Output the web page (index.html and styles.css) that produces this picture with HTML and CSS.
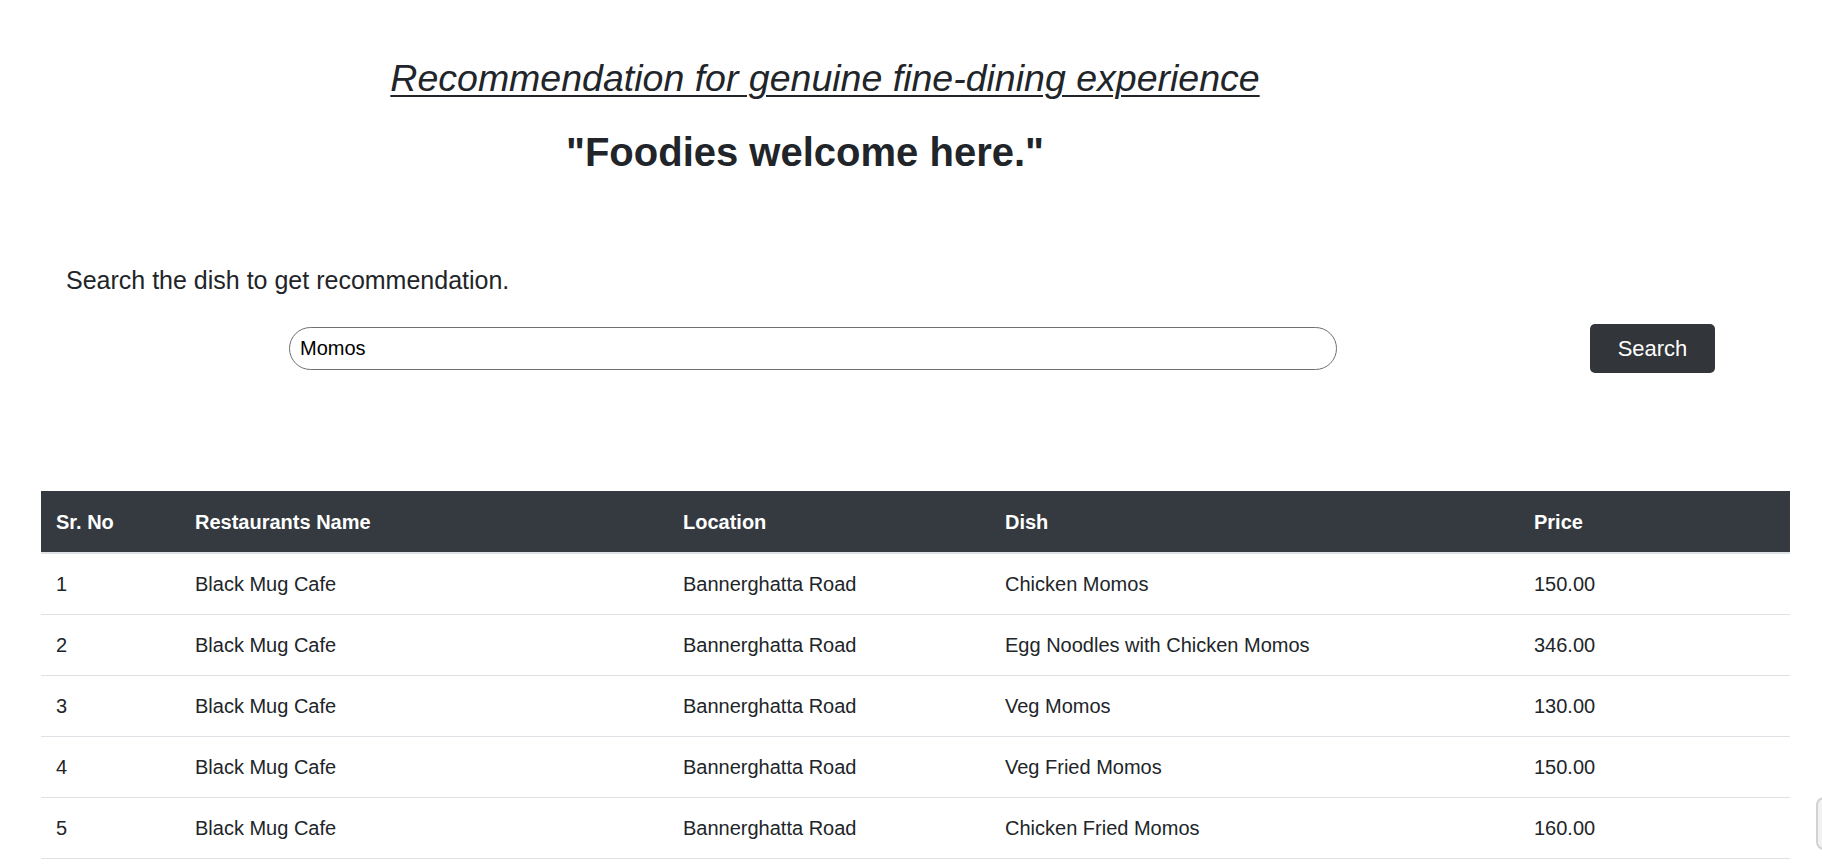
FILE: index.html
```html
<!DOCTYPE html>
<html lang="en">
<head>
<meta charset="utf-8">
<title>Foodies</title>
<link rel="stylesheet" href="styles.css">
</head>
<body>
<header class="hero">
  <h2 class="tagline">Recommendation for genuine fine-dining experience</h2>
  <h1 class="motto">"Foodies welcome here."</h1>
</header>
<section class="search">
  <p class="prompt">Search the dish to get recommendation.</p>
  <form class="search-row">
    <input class="search-input" type="text" value="Momos">
    <button class="search-btn" type="button">Search</button>
  </form>
</section>
<table class="results">
  <colgroup>
    <col class="c-no"><col class="c-name"><col class="c-loc"><col class="c-dish"><col class="c-price">
  </colgroup>
  <thead>
    <tr><th>Sr. No</th><th>Restaurants Name</th><th>Location</th><th>Dish</th><th>Price</th></tr>
  </thead>
  <tbody>
    <tr><td>1</td><td>Black Mug Cafe</td><td>Bannerghatta Road</td><td>Chicken Momos</td><td>150.00</td></tr>
    <tr><td>2</td><td>Black Mug Cafe</td><td>Bannerghatta Road</td><td>Egg Noodles with Chicken Momos</td><td>346.00</td></tr>
    <tr><td>3</td><td>Black Mug Cafe</td><td>Bannerghatta Road</td><td>Veg Momos</td><td>130.00</td></tr>
    <tr><td>4</td><td>Black Mug Cafe</td><td>Bannerghatta Road</td><td>Veg Fried Momos</td><td>150.00</td></tr>
    <tr><td>5</td><td>Black Mug Cafe</td><td>Bannerghatta Road</td><td>Chicken Fried Momos</td><td>160.00</td></tr>
  </tbody>
</table>
<div class="side-tab"></div>
</body>
</html>
```
FILE: styles.css
```css
html, body {
  margin: 0;
  padding: 0;
  background: #fff;
}
body {
  font-family: "Liberation Sans", Arial, sans-serif;
  color: #212529;
  overflow: hidden;
}
.hero {
  width: 1650px;
  text-align: center;
}
.tagline {
  margin: 56px 0 0;
  font-size: 37.5px;
  line-height: 45px;
  font-weight: normal;
  font-style: italic;
  text-decoration: underline;
  text-decoration-thickness: 2px;
  text-underline-offset: 4px;
}
.motto {
  margin: 27px 40px 0 0;
  font-size: 40px;
  line-height: 48px;
  font-weight: bold;
}
.search {
  display: flex;
  flex-direction: column;
}
.prompt {
  margin: 89px 0 0 66px;
  font-size: 25px;
  line-height: 30px;
}
.search-row {
  display: flex;
  align-items: center;
  margin: 29px 0 0 289px;
  gap: 253px;
}
.search-input {
  box-sizing: border-box;
  width: 1048px;
  height: 43px;
  border: 1px solid #6f6f6f;
  border-radius: 22px;
  padding: 0 10px;
  font-family: "Liberation Sans", Arial, sans-serif;
  font-size: 20px;
  color: #000;
  background: #fff;
  outline: none;
}
.search-btn {
  box-sizing: border-box;
  width: 125px;
  height: 49px;
  border: none;
  border-radius: 5px;
  background: #323539;
  color: #fff;
  font-family: "Liberation Sans", Arial, sans-serif;
  font-size: 22px;
  padding: 0;
}
.results {
  margin: 118px 0 0 41px;
  width: 1749px;
  border-collapse: collapse;
  table-layout: fixed;
  font-size: 20px;
}
.c-no { width: 139px; }
.c-name { width: 488px; }
.c-loc { width: 322px; }
.c-dish { width: 529px; }
.c-price { width: 271px; }
.results th {
  background: #343a40;
  color: #fff;
  font-weight: bold;
  text-align: left;
  line-height: 30px;
  padding: 15.5px 15px;
  border-bottom: 2px solid #dee2e6;
}
.results td {
  line-height: 30px;
  padding: 15px;
  border-bottom: 1px solid #dee2e6;
}
.side-tab {
  position: absolute;
  left: 1816px;
  top: 797px;
  width: 20px;
  height: 53px;
  box-sizing: border-box;
  border: 2px solid #d2d2d2;
  border-radius: 8px;
  background: #f2f2f2;
}
```
